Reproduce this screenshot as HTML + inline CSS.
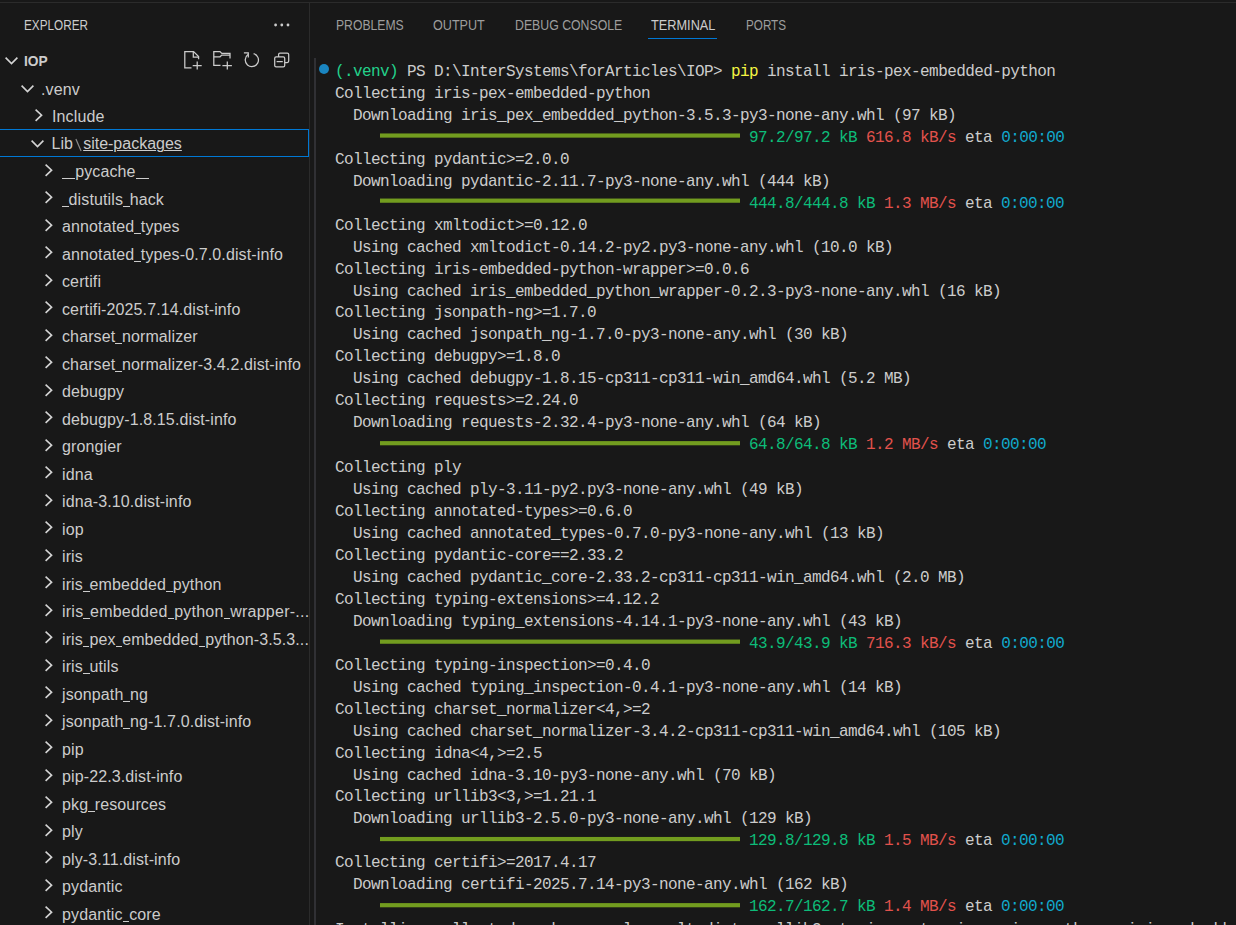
<!DOCTYPE html>
<html><head><meta charset="utf-8">
<style>
*{margin:0;padding:0;box-sizing:border-box}
html,body{width:1236px;height:925px;overflow:hidden;background:#181818}
body{position:relative;font-family:"Liberation Sans",sans-serif;color:#cccccc}
.topline{position:absolute;left:0;top:2px;width:1236px;height:1px;background:#2b2b2b}
.vline{position:absolute;left:309px;top:3px;width:1px;height:922px;background:#2b2b2b}
.gutter{position:absolute;left:314px;top:58px;width:2px;height:867px;background:#303034}
.title{position:absolute;left:24px;top:17px;font-size:14px;line-height:16px;color:#cccccc;transform:scaleX(0.84);transform-origin:0 0}
.row{position:absolute;left:0;width:310px;height:27.5px;font-size:16px;line-height:27.5px;white-space:nowrap}
.row .t{position:absolute;top:1.75px;letter-spacing:0.12px}
.row .t.iop{font-weight:bold;font-size:13.75px;top:1.5px;letter-spacing:0}
.row .sep{display:inline-block;width:10.2px}
.us{display:inline-block;width:6.6px;height:1.2px;background:#cccccc;vertical-align:-2.2px}
.row u{text-decoration-thickness:1px;text-underline-offset:0.5px}
.chev{position:absolute}
.row.sel{left:-1px;top:129px!important;height:28px;border:1px solid #0078d4}
.row.sel .t{top:0.25px;letter-spacing:0}.row.sel .chev{margin-top:-1.25px}

.tab{position:absolute;top:17px;font-size:14px;line-height:16px;color:#9d9d9d;white-space:nowrap;transform:scaleX(0.87);transform-origin:0 0}
.tab.act{color:#cccccc}
.uline{position:absolute;left:648px;top:37.6px;width:69px;height:1.25px;background:#0078d4}
.term{position:absolute;left:335px;top:61px;font-family:"Liberation Mono",monospace;font-size:16px;letter-spacing:-0.6px;line-height:20.9524px;transform:scaleY(1.05);transform-origin:0 0;white-space:pre;color:#cccccc}
.g{color:#0dbc79}.bg{color:#23d18b}.r{color:#e2524c}.c{color:#11a8cd}.y{color:#f5f543}
.bar{display:inline-block;width:360px;height:4px;background:#729c1f;vertical-align:middle;position:relative;top:-2px}
.dot{position:absolute;left:319px;top:64px;width:10.4px;height:10.4px;border-radius:50%;background:#1a85c0}

</style></head><body>
<div class="topline"></div>
<div class="vline"></div>
<div class="gutter"></div>
<div class="title">EXPLORER</div>
<svg style="position:absolute;left:0;top:0" width="310" height="80">
<g fill="none" stroke="#cccccc" stroke-width="1.25">
<path d="M191.5 67.9 H184.8 V51.6 H193.6 L198.6 56.6 V59.3"/>
<path d="M193.3 51.6 V57 H198.6"/>
<path d="M197.2 61.6 V69.5 M192.7 65.7 H201.7"/>
<path d="M220.5 65.4 H213.8 V51.6 H220 L221.8 53.4 H230 V58.4"/>
<path d="M213.8 56.8 H220 L221.8 55 H230"/>
<path d="M227.3 61.6 V69.5 M222.4 65.7 H231.9"/>
<path d="M253.6 53.6 A6.6 6.6 0 1 1 248 54.6"/>
<path d="M243.9 52.9 H248.3 V57.4"/>
<rect x="274.7" y="56.9" width="10" height="9.9" rx="1.4"/>
<path d="M278.6 56.9 V54.6 Q278.6 53.2 280 53.2 H287.3 Q288.7 53.2 288.7 54.6 V61.1 Q288.7 62.5 287.3 62.5 H284.7"/>
<path d="M276.6 61.6 H282.8"/>
</g>
<g fill="#cccccc"><circle cx="275.6" cy="25" r="1.4"/><circle cx="281.8" cy="25" r="1.4"/><circle cx="288" cy="25" r="1.4"/></g>
</svg>
<div class="row " style="top:46.25px"><svg class="chev" style="left:4px;top:9.5px" width="16" height="10"><path d="M1.6 1.6 L7.5 7.5 L13.4 1.6" fill="none" stroke="#d4d4d4" stroke-width="1.6"/></svg><span class="t iop" style="left:24px">IOP</span></div><div class="row " style="top:73.75px"><svg class="chev" style="left:20px;top:9.8px" width="16" height="10"><path d="M1.6 1.6 L7.5 7.5 L13.4 1.6" fill="none" stroke="#d4d4d4" stroke-width="1.6"/></svg><span class="t" style="left:41px">.venv</span></div><div class="row " style="top:101.25px"><svg class="chev" style="left:34px;top:6.6px" width="10" height="15"><path d="M1.6 1.6 L7.6 7.2 L1.6 12.8" fill="none" stroke="#d4d4d4" stroke-width="1.6"/></svg><span class="t" style="left:52px">Include</span></div><div class="row sel" style="top:128.75px"><svg class="chev" style="left:30.3px;top:10.2px" width="16" height="10"><path d="M1.6 1.6 L7.5 7.5 L13.4 1.6" fill="none" stroke="#d4d4d4" stroke-width="1.6"/></svg><span class="t" style="left:51.6px">Lib<span class="sep"></span><u>site-packages</u></span><svg style="position:absolute;left:0;top:0" width="100" height="28"><path d="M75.9 8.9 L81.1 20.9" stroke="#8a8a8a" stroke-width="1.2"/></svg></div><div class="row " style="top:156.25px"><svg class="chev" style="left:43.6px;top:6.6px" width="10" height="15"><path d="M1.6 1.6 L7.6 7.2 L1.6 12.8" fill="none" stroke="#d4d4d4" stroke-width="1.6"/></svg><span class="t" style="left:62px;"><i class="us"></i><i class="us"></i>pycache<i class="us"></i><i class="us"></i></span></div><div class="row " style="top:183.75px"><svg class="chev" style="left:43.6px;top:6.6px" width="10" height="15"><path d="M1.6 1.6 L7.6 7.2 L1.6 12.8" fill="none" stroke="#d4d4d4" stroke-width="1.6"/></svg><span class="t" style="left:62px;"><i class="us"></i>distutils<i class="us"></i>hack</span></div><div class="row " style="top:211.25px"><svg class="chev" style="left:43.6px;top:6.6px" width="10" height="15"><path d="M1.6 1.6 L7.6 7.2 L1.6 12.8" fill="none" stroke="#d4d4d4" stroke-width="1.6"/></svg><span class="t" style="left:62px;">annotated<i class="us"></i>types</span></div><div class="row " style="top:238.75px"><svg class="chev" style="left:43.6px;top:6.6px" width="10" height="15"><path d="M1.6 1.6 L7.6 7.2 L1.6 12.8" fill="none" stroke="#d4d4d4" stroke-width="1.6"/></svg><span class="t" style="left:62px;">annotated<i class="us"></i>types-0.7.0.dist-info</span></div><div class="row " style="top:266.25px"><svg class="chev" style="left:43.6px;top:6.6px" width="10" height="15"><path d="M1.6 1.6 L7.6 7.2 L1.6 12.8" fill="none" stroke="#d4d4d4" stroke-width="1.6"/></svg><span class="t" style="left:62px;">certifi</span></div><div class="row " style="top:293.75px"><svg class="chev" style="left:43.6px;top:6.6px" width="10" height="15"><path d="M1.6 1.6 L7.6 7.2 L1.6 12.8" fill="none" stroke="#d4d4d4" stroke-width="1.6"/></svg><span class="t" style="left:62px;">certifi-2025.7.14.dist-info</span></div><div class="row " style="top:321.25px"><svg class="chev" style="left:43.6px;top:6.6px" width="10" height="15"><path d="M1.6 1.6 L7.6 7.2 L1.6 12.8" fill="none" stroke="#d4d4d4" stroke-width="1.6"/></svg><span class="t" style="left:62px;">charset<i class="us"></i>normalizer</span></div><div class="row " style="top:348.75px"><svg class="chev" style="left:43.6px;top:6.6px" width="10" height="15"><path d="M1.6 1.6 L7.6 7.2 L1.6 12.8" fill="none" stroke="#d4d4d4" stroke-width="1.6"/></svg><span class="t" style="left:62px;">charset<i class="us"></i>normalizer-3.4.2.dist-info</span></div><div class="row " style="top:376.25px"><svg class="chev" style="left:43.6px;top:6.6px" width="10" height="15"><path d="M1.6 1.6 L7.6 7.2 L1.6 12.8" fill="none" stroke="#d4d4d4" stroke-width="1.6"/></svg><span class="t" style="left:62px;">debugpy</span></div><div class="row " style="top:403.75px"><svg class="chev" style="left:43.6px;top:6.6px" width="10" height="15"><path d="M1.6 1.6 L7.6 7.2 L1.6 12.8" fill="none" stroke="#d4d4d4" stroke-width="1.6"/></svg><span class="t" style="left:62px;">debugpy-1.8.15.dist-info</span></div><div class="row " style="top:431.25px"><svg class="chev" style="left:43.6px;top:6.6px" width="10" height="15"><path d="M1.6 1.6 L7.6 7.2 L1.6 12.8" fill="none" stroke="#d4d4d4" stroke-width="1.6"/></svg><span class="t" style="left:62px;">grongier</span></div><div class="row " style="top:458.75px"><svg class="chev" style="left:43.6px;top:6.6px" width="10" height="15"><path d="M1.6 1.6 L7.6 7.2 L1.6 12.8" fill="none" stroke="#d4d4d4" stroke-width="1.6"/></svg><span class="t" style="left:62px;">idna</span></div><div class="row " style="top:486.25px"><svg class="chev" style="left:43.6px;top:6.6px" width="10" height="15"><path d="M1.6 1.6 L7.6 7.2 L1.6 12.8" fill="none" stroke="#d4d4d4" stroke-width="1.6"/></svg><span class="t" style="left:62px;">idna-3.10.dist-info</span></div><div class="row " style="top:513.75px"><svg class="chev" style="left:43.6px;top:6.6px" width="10" height="15"><path d="M1.6 1.6 L7.6 7.2 L1.6 12.8" fill="none" stroke="#d4d4d4" stroke-width="1.6"/></svg><span class="t" style="left:62px;">iop</span></div><div class="row " style="top:541.25px"><svg class="chev" style="left:43.6px;top:6.6px" width="10" height="15"><path d="M1.6 1.6 L7.6 7.2 L1.6 12.8" fill="none" stroke="#d4d4d4" stroke-width="1.6"/></svg><span class="t" style="left:62px;">iris</span></div><div class="row " style="top:568.75px"><svg class="chev" style="left:43.6px;top:6.6px" width="10" height="15"><path d="M1.6 1.6 L7.6 7.2 L1.6 12.8" fill="none" stroke="#d4d4d4" stroke-width="1.6"/></svg><span class="t" style="left:62px;">iris<i class="us"></i>embedded<i class="us"></i>python</span></div><div class="row " style="top:596.25px"><svg class="chev" style="left:43.6px;top:6.6px" width="10" height="15"><path d="M1.6 1.6 L7.6 7.2 L1.6 12.8" fill="none" stroke="#d4d4d4" stroke-width="1.6"/></svg><span class="t" style="left:62px;letter-spacing:0.24px;">iris<i class="us"></i>embedded<i class="us"></i>python<i class="us"></i>wrapper-...</span></div><div class="row " style="top:623.75px"><svg class="chev" style="left:43.6px;top:6.6px" width="10" height="15"><path d="M1.6 1.6 L7.6 7.2 L1.6 12.8" fill="none" stroke="#d4d4d4" stroke-width="1.6"/></svg><span class="t" style="left:62px;letter-spacing:0.1px;">iris<i class="us"></i>pex<i class="us"></i>embedded<i class="us"></i>python-3.5.3...</span></div><div class="row " style="top:651.25px"><svg class="chev" style="left:43.6px;top:6.6px" width="10" height="15"><path d="M1.6 1.6 L7.6 7.2 L1.6 12.8" fill="none" stroke="#d4d4d4" stroke-width="1.6"/></svg><span class="t" style="left:62px;">iris<i class="us"></i>utils</span></div><div class="row " style="top:678.75px"><svg class="chev" style="left:43.6px;top:6.6px" width="10" height="15"><path d="M1.6 1.6 L7.6 7.2 L1.6 12.8" fill="none" stroke="#d4d4d4" stroke-width="1.6"/></svg><span class="t" style="left:62px;">jsonpath<i class="us"></i>ng</span></div><div class="row " style="top:706.25px"><svg class="chev" style="left:43.6px;top:6.6px" width="10" height="15"><path d="M1.6 1.6 L7.6 7.2 L1.6 12.8" fill="none" stroke="#d4d4d4" stroke-width="1.6"/></svg><span class="t" style="left:62px;">jsonpath<i class="us"></i>ng-1.7.0.dist-info</span></div><div class="row " style="top:733.75px"><svg class="chev" style="left:43.6px;top:6.6px" width="10" height="15"><path d="M1.6 1.6 L7.6 7.2 L1.6 12.8" fill="none" stroke="#d4d4d4" stroke-width="1.6"/></svg><span class="t" style="left:62px;">pip</span></div><div class="row " style="top:761.25px"><svg class="chev" style="left:43.6px;top:6.6px" width="10" height="15"><path d="M1.6 1.6 L7.6 7.2 L1.6 12.8" fill="none" stroke="#d4d4d4" stroke-width="1.6"/></svg><span class="t" style="left:62px;">pip-22.3.dist-info</span></div><div class="row " style="top:788.75px"><svg class="chev" style="left:43.6px;top:6.6px" width="10" height="15"><path d="M1.6 1.6 L7.6 7.2 L1.6 12.8" fill="none" stroke="#d4d4d4" stroke-width="1.6"/></svg><span class="t" style="left:62px;">pkg<i class="us"></i>resources</span></div><div class="row " style="top:816.25px"><svg class="chev" style="left:43.6px;top:6.6px" width="10" height="15"><path d="M1.6 1.6 L7.6 7.2 L1.6 12.8" fill="none" stroke="#d4d4d4" stroke-width="1.6"/></svg><span class="t" style="left:62px;">ply</span></div><div class="row " style="top:843.75px"><svg class="chev" style="left:43.6px;top:6.6px" width="10" height="15"><path d="M1.6 1.6 L7.6 7.2 L1.6 12.8" fill="none" stroke="#d4d4d4" stroke-width="1.6"/></svg><span class="t" style="left:62px;">ply-3.11.dist-info</span></div><div class="row " style="top:871.25px"><svg class="chev" style="left:43.6px;top:6.6px" width="10" height="15"><path d="M1.6 1.6 L7.6 7.2 L1.6 12.8" fill="none" stroke="#d4d4d4" stroke-width="1.6"/></svg><span class="t" style="left:62px;">pydantic</span></div><div class="row " style="top:898.75px"><svg class="chev" style="left:43.6px;top:6.6px" width="10" height="15"><path d="M1.6 1.6 L7.6 7.2 L1.6 12.8" fill="none" stroke="#d4d4d4" stroke-width="1.6"/></svg><span class="t" style="left:62px;">pydantic<i class="us"></i>core</span></div>
<div class="tab" style="left:335.5px;transform:scaleX(0.87)">PROBLEMS</div><div class="tab" style="left:432.6px;transform:scaleX(0.9)">OUTPUT</div><div class="tab" style="left:514.5px;transform:scaleX(0.878)">DEBUG CONSOLE</div><div class="tab act" style="left:651px;transform:scaleX(0.91)">TERMINAL</div><div class="tab" style="left:745.6px;transform:scaleX(0.835)">PORTS</div>
<div class="uline"></div>
<div class="dot"></div>
<div class="term"><span class="bg">(.venv)</span> PS D:\InterSystems\forArticles\IOP&gt; <span class="y">pip</span> install iris-pex-embedded-python
Collecting iris-pex-embedded-python
  Downloading iris_pex_embedded_python-3.5.3-py3-none-any.whl (97 kB)
     <span class="bar"></span> <span class="g">97.2/97.2 kB</span> <span class="r">616.8 kB/s</span> eta <span class="c">0:00:00</span>
Collecting pydantic&gt;=2.0.0
  Downloading pydantic-2.11.7-py3-none-any.whl (444 kB)
     <span class="bar"></span> <span class="g">444.8/444.8 kB</span> <span class="r">1.3 MB/s</span> eta <span class="c">0:00:00</span>
Collecting xmltodict&gt;=0.12.0
  Using cached xmltodict-0.14.2-py2.py3-none-any.whl (10.0 kB)
Collecting iris-embedded-python-wrapper&gt;=0.0.6
  Using cached iris_embedded_python_wrapper-0.2.3-py3-none-any.whl (16 kB)
Collecting jsonpath-ng&gt;=1.7.0
  Using cached jsonpath_ng-1.7.0-py3-none-any.whl (30 kB)
Collecting debugpy&gt;=1.8.0
  Using cached debugpy-1.8.15-cp311-cp311-win_amd64.whl (5.2 MB)
Collecting requests&gt;=2.24.0
  Downloading requests-2.32.4-py3-none-any.whl (64 kB)
     <span class="bar"></span> <span class="g">64.8/64.8 kB</span> <span class="r">1.2 MB/s</span> eta <span class="c">0:00:00</span>
Collecting ply
  Using cached ply-3.11-py2.py3-none-any.whl (49 kB)
Collecting annotated-types&gt;=0.6.0
  Using cached annotated_types-0.7.0-py3-none-any.whl (13 kB)
Collecting pydantic-core==2.33.2
  Using cached pydantic_core-2.33.2-cp311-cp311-win_amd64.whl (2.0 MB)
Collecting typing-extensions&gt;=4.12.2
  Downloading typing_extensions-4.14.1-py3-none-any.whl (43 kB)
     <span class="bar"></span> <span class="g">43.9/43.9 kB</span> <span class="r">716.3 kB/s</span> eta <span class="c">0:00:00</span>
Collecting typing-inspection&gt;=0.4.0
  Using cached typing_inspection-0.4.1-py3-none-any.whl (14 kB)
Collecting charset_normalizer&lt;4,&gt;=2
  Using cached charset_normalizer-3.4.2-cp311-cp311-win_amd64.whl (105 kB)
Collecting idna&lt;4,&gt;=2.5
  Using cached idna-3.10-py3-none-any.whl (70 kB)
Collecting urllib3&lt;3,&gt;=1.21.1
  Downloading urllib3-2.5.0-py3-none-any.whl (129 kB)
     <span class="bar"></span> <span class="g">129.8/129.8 kB</span> <span class="r">1.5 MB/s</span> eta <span class="c">0:00:00</span>
Collecting certifi&gt;=2017.4.17
  Downloading certifi-2025.7.14-py3-none-any.whl (162 kB)
     <span class="bar"></span> <span class="g">162.7/162.7 kB</span> <span class="r">1.4 MB/s</span> eta <span class="c">0:00:00</span>
Installing collected packages: ply, xmltodict, urllib3, typing-extensions, jsonpath-ng, iris-embedded-python-wrapper, idna, debugpy</div>
</body></html>
